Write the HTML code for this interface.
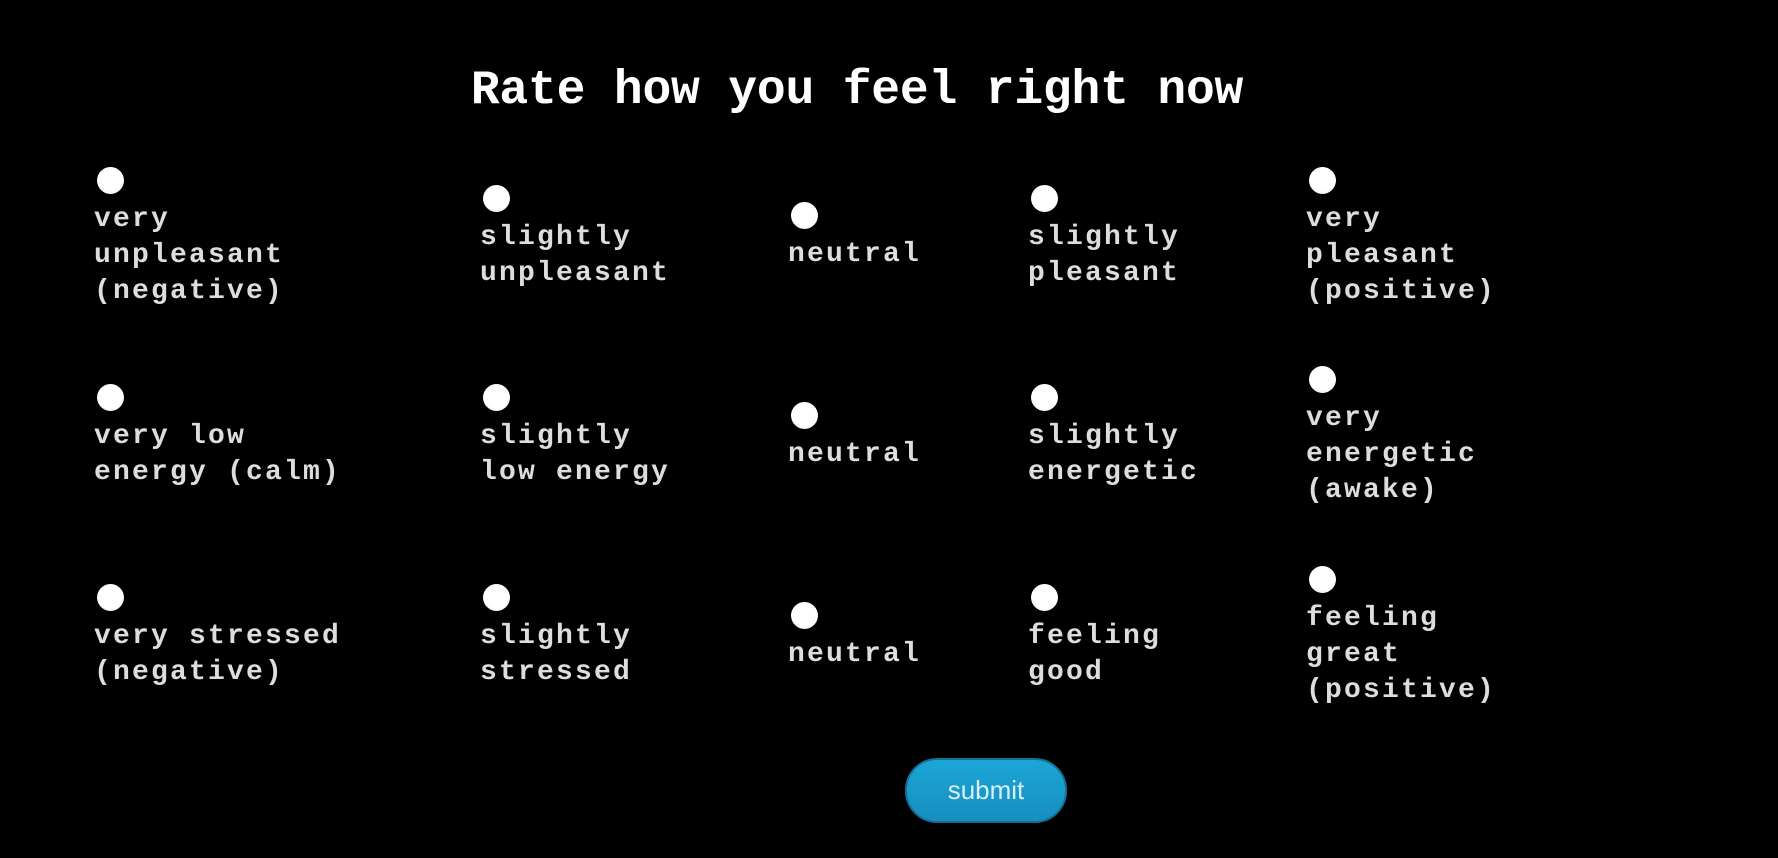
<!DOCTYPE html>
<html><head><meta charset="utf-8"><style>
html,body{margin:0;padding:0;background:#000;width:1778px;height:858px;overflow:hidden;position:relative}
h1{position:absolute;left:0;width:1714px;top:63px;margin:0;text-align:center;font:bold 48px "Liberation Mono",monospace;letter-spacing:-0.2px;color:#fff;line-height:56px}
.c{position:absolute;font:bold 28px "Liberation Mono",monospace;letter-spacing:2.2px;line-height:36px;color:#ddd}
.r{width:27px;height:27px;border-radius:50%;background:radial-gradient(circle at 50% 40%,#fff 60%,#e6e6e6 100%);margin-left:3px;margin-bottom:8px}
.btn{position:absolute;left:905px;top:758px;width:158px;height:61px;border:2px solid #136f93;border-radius:32px;background:linear-gradient(#1ba6d6,#178fbf);color:#d8eef8;font:26px "Liberation Sans",sans-serif;text-align:center;line-height:61px}
</style></head><body>
<h1>Rate how you feel right now</h1>

<div class="c" style="left:94px;top:167px"><div class="r"></div>very<br>unpleasant<br>(negative)</div>
<div class="c" style="left:480px;top:185px"><div class="r"></div>slightly<br>unpleasant</div>
<div class="c" style="left:788px;top:202px"><div class="r"></div>neutral</div>
<div class="c" style="left:1028px;top:185px"><div class="r"></div>slightly<br>pleasant</div>
<div class="c" style="left:1306px;top:167px"><div class="r"></div>very<br>pleasant<br>(positive)</div>

<div class="c" style="left:94px;top:384px"><div class="r"></div>very low<br>energy (calm)</div>
<div class="c" style="left:480px;top:384px"><div class="r"></div>slightly<br>low energy</div>
<div class="c" style="left:788px;top:402px"><div class="r"></div>neutral</div>
<div class="c" style="left:1028px;top:384px"><div class="r"></div>slightly<br>energetic</div>
<div class="c" style="left:1306px;top:366px"><div class="r"></div>very<br>energetic<br>(awake)</div>

<div class="c" style="left:94px;top:584px"><div class="r"></div>very stressed<br>(negative)</div>
<div class="c" style="left:480px;top:584px"><div class="r"></div>slightly<br>stressed</div>
<div class="c" style="left:788px;top:602px"><div class="r"></div>neutral</div>
<div class="c" style="left:1028px;top:584px"><div class="r"></div>feeling<br>good</div>
<div class="c" style="left:1306px;top:566px"><div class="r"></div>feeling<br>great<br>(positive)</div>

<div class="btn">submit</div>
</body></html>
